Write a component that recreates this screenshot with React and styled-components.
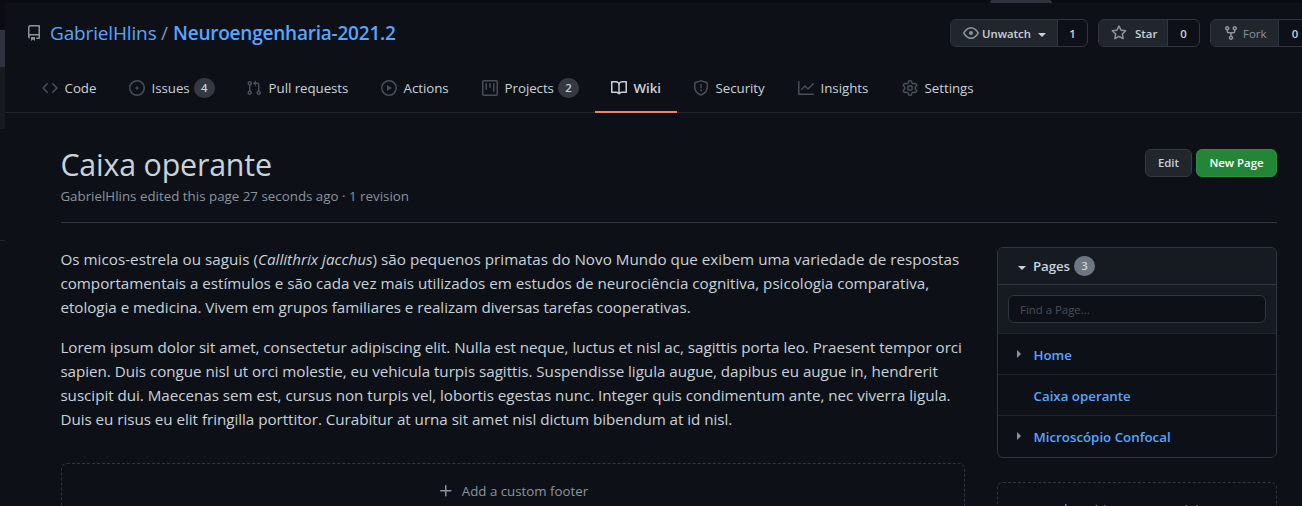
import React from 'react';
import styled, { createGlobalStyle } from 'styled-components';

const GlobalStyle = createGlobalStyle`
  *, *::before, *::after { box-sizing: border-box; }
  html, body { margin: 0; background: #0d1117; }
  body { overflow: hidden; }
  #root { width: 1302px; }
  p, h1, ul { margin: 0; padding: 0; }
  a { text-decoration: none; color: inherit; }
`;

const paths = {
  repo: 'M2 2.5A2.5 2.5 0 014.5 0h8.75a.75.75 0 01.75.75v12.5a.75.75 0 01-.75.75h-2.5a.75.75 0 110-1.5h1.75v-2h-8a1 1 0 00-.714 1.7.75.75 0 01-1.072 1.05A2.495 2.495 0 012 11.5v-9zm10.5-1V9h-8c-.356 0-.694.074-1 .208V2.5a1 1 0 011-1h8zM5 12.25v3.25a.25.25 0 00.4.2l1.45-1.087a.25.25 0 01.3 0L8.6 15.7a.25.25 0 00.4-.2v-3.25a.25.25 0 00-.25-.25h-3.5a.25.25 0 00-.25.25z',
  code: 'M4.72 3.22a.75.75 0 011.06 1.06L2.06 8l3.72 3.72a.75.75 0 11-1.06 1.06L.47 8.53a.75.75 0 010-1.06l4.25-4.25zm6.56 0a.75.75 0 10-1.06 1.06L13.94 8l-3.72 3.72a.75.75 0 101.06 1.06l4.25-4.25a.75.75 0 000-1.06l-4.25-4.25z',
  issue: 'M8 9.5a1.5 1.5 0 100-3 1.5 1.5 0 000 3zM8 0a8 8 0 100 16A8 8 0 008 0zM1.5 8a6.5 6.5 0 1113 0 6.5 6.5 0 01-13 0z',
  pull: 'M7.177 3.073L9.573.677A.25.25 0 0110 .854v4.792a.25.25 0 01-.427.177L7.177 3.427a.25.25 0 010-.354zM3.75 2.5a.75.75 0 100 1.5.75.75 0 000-1.5zm-2.25.75a2.25 2.25 0 113 2.122v5.256a2.251 2.251 0 11-1.5 0V5.372A2.25 2.25 0 011.5 3.25zM11 2.5h-1V4h1a1 1 0 011 1v5.628a2.251 2.251 0 101.5 0V5A2.5 2.5 0 0011 2.5zm1 10.25a.75.75 0 111.5 0 .75.75 0 01-1.5 0zM3.75 12a.75.75 0 100 1.5.75.75 0 000-1.5z',
  play: 'M1.5 8a6.5 6.5 0 1113 0 6.5 6.5 0 01-13 0zM8 0a8 8 0 100 16A8 8 0 008 0zM6.379 5.227A.25.25 0 006 5.442v5.117a.25.25 0 00.379.214l4.264-2.559a.25.25 0 000-.428L6.379 5.227z',
  project: 'M1.75 0A1.75 1.75 0 000 1.75v12.5C0 15.216.784 16 1.75 16h12.5A1.75 1.75 0 0016 14.25V1.75A1.75 1.75 0 0014.25 0H1.75zM1.5 1.75a.25.25 0 01.25-.25h12.5a.25.25 0 01.25.25v12.5a.25.25 0 01-.25.25H1.75a.25.25 0 01-.25-.25V1.75zM11.75 3a.75.75 0 00-.75.75v7.5a.75.75 0 001.5 0v-7.5a.75.75 0 00-.75-.75zm-8.25.75a.75.75 0 011.5 0v5.5a.75.75 0 01-1.5 0v-5.5zM8 3a.75.75 0 00-.75.75v3.5a.75.75 0 001.5 0v-3.5A.75.75 0 008 3z',
  book: 'M0 1.75A.75.75 0 01.75 1h4.253c1.227 0 2.317.59 3 1.501A3.744 3.744 0 0111.006 1h4.245a.75.75 0 01.75.75v10.5a.75.75 0 01-.75.75h-4.507a2.25 2.25 0 00-1.591.659l-.622.621a.75.75 0 01-1.06 0l-.622-.621A2.25 2.25 0 005.258 13H.75a.75.75 0 01-.75-.75V1.75zm8.755 3a2.25 2.25 0 012.25-2.25H14.5v9h-3.757c-.71 0-1.4.201-1.992.572l.004-7.322zm-1.504 7.324l.004-5.073-.002-2.253A2.25 2.25 0 005.003 2.5H1.5v9h3.757a3.75 3.75 0 011.994.574z',
  shield: 'M7.467.133a1.75 1.75 0 011.066 0l5.25 1.68A1.75 1.75 0 0115 3.48V7c0 1.566-.32 3.182-1.303 4.682-.983 1.498-2.585 2.813-5.032 3.855a1.7 1.7 0 01-1.33 0c-2.447-1.042-4.049-2.357-5.032-3.855C1.32 10.182 1 8.566 1 7V3.48a1.75 1.75 0 011.217-1.667l5.25-1.68zm.61 1.429a.25.25 0 00-.153 0l-5.25 1.68a.25.25 0 00-.174.238V7c0 1.358.275 2.666 1.057 3.86.784 1.194 2.121 2.34 4.366 3.297a.2.2 0 00.154 0c2.245-.956 3.582-2.104 4.366-3.298C13.225 9.666 13.5 8.36 13.5 7V3.48a.25.25 0 00-.174-.237l-5.25-1.68zM9 10.5a1 1 0 11-2 0 1 1 0 012 0zm-.25-5.75a.75.75 0 10-1.5 0v3a.75.75 0 001.5 0v-3z',
  graph: 'M1.5 1.75a.75.75 0 00-1.5 0v12.5c0 .414.336.75.75.75h14.5a.75.75 0 000-1.5H1.5V1.75zm14.28 2.53a.75.75 0 00-1.06-1.06L10 7.94 7.53 5.47a.75.75 0 00-1.06 0L3.22 8.72a.75.75 0 001.06 1.06L7 7.06l2.47 2.47a.75.75 0 001.06 0l5.25-5.25z',
  gear: 'M7.429 1.525a6.593 6.593 0 011.142 0c.036.003.108.036.137.146l.289 1.105c.147.56.55.967.997 1.189.174.086.341.183.501.29.417.278.97.423 1.53.27l1.102-.303c.11-.03.175.016.195.046.219.31.41.641.573.989.014.031.022.11-.059.19l-.815.806c-.411.406-.562.957-.53 1.456a4.588 4.588 0 010 .582c-.032.499.119 1.05.53 1.456l.815.806c.08.08.073.159.059.19a6.494 6.494 0 01-.573.99c-.02.029-.086.074-.195.045l-1.103-.303c-.559-.153-1.112-.008-1.529.27-.16.107-.327.204-.5.29-.449.222-.851.628-.998 1.189l-.289 1.105c-.029.11-.101.143-.137.146a6.613 6.613 0 01-1.142 0c-.036-.003-.108-.037-.137-.146l-.289-1.105c-.147-.56-.55-.967-.997-1.189a4.502 4.502 0 01-.501-.29c-.417-.278-.97-.423-1.53-.27l-1.102.303c-.11.03-.175-.016-.195-.046a6.492 6.492 0 01-.573-.989c-.014-.031-.022-.11.059-.19l.815-.806c.411-.406.562-.957.53-1.456a4.587 4.587 0 010-.582c.032-.499-.119-1.05-.53-1.456l-.815-.806c-.08-.08-.073-.159-.059-.19a6.44 6.44 0 01.573-.99c.02-.029.086-.075.195-.045l1.103.303c.559.153 1.112.008 1.529-.27.16-.107.327-.204.5-.29.449-.222.851-.628.998-1.189l.289-1.105c.029-.11.101-.143.137-.146zM8 0c-.236 0-.47.01-.701.03-.743.065-1.29.615-1.458 1.261l-.29 1.106c-.017.066-.078.158-.211.224a5.994 5.994 0 00-.668.386c-.123.082-.233.09-.3.071L3.27 2.776c-.644-.177-1.392.02-1.82.63a7.977 7.977 0 00-.704 1.217c-.315.675-.111 1.422.363 1.891l.815.806c.05.048.098.147.088.294a6.084 6.084 0 000 .772c.01.147-.038.246-.088.294l-.815.806c-.474.469-.678 1.216-.363 1.891.2.428.436.835.704 1.218.428.609 1.176.806 1.82.63l1.103-.303c.066-.019.176-.011.299.071.213.143.436.272.668.386.133.066.194.158.212.224l.289 1.106c.169.646.715 1.196 1.458 1.26a8.094 8.094 0 001.402 0c.743-.064 1.29-.614 1.458-1.26l.29-1.106c.017-.066.078-.158.211-.224a5.98 5.98 0 00.668-.386c.123-.082.233-.09.3-.071l1.102.302c.644.177 1.392-.02 1.82-.63.268-.382.505-.789.704-1.217.315-.675.111-1.422-.364-1.891l-.814-.806c-.05-.048-.098-.147-.088-.294a6.1 6.1 0 000-.772c-.01-.147.039-.246.088-.294l.814-.806c.475-.469.679-1.216.364-1.891a7.992 7.992 0 00-.704-1.218c-.428-.609-1.176-.806-1.82-.63l-1.103.303c-.066.019-.176.011-.299-.071a5.991 5.991 0 00-.668-.386c-.133-.066-.194-.158-.212-.224L10.16 1.29C9.99.645 9.444.095 8.701.031A8.094 8.094 0 008 0zm1.5 8a1.5 1.5 0 11-3 0 1.5 1.5 0 013 0zM11 8a3 3 0 11-6 0 3 3 0 016 0z',
  eye: 'M1.679 7.932c.412-.621 1.242-1.75 2.366-2.717C5.175 4.242 6.527 3.5 8 3.5c1.473 0 2.824.742 3.955 1.715 1.124.967 1.954 2.096 2.366 2.717a.119.119 0 010 .136c-.412.621-1.242 1.75-2.366 2.717C10.825 11.758 9.473 12.5 8 12.5c-1.473 0-2.824-.742-3.955-1.715C2.92 9.818 2.09 8.69 1.679 8.068a.119.119 0 010-.136zM8 2c-1.981 0-3.67.992-4.933 2.078C1.797 5.169.88 6.423.43 7.1a1.619 1.619 0 000 1.798c.45.678 1.367 1.932 2.637 3.024C4.329 13.008 6.019 14 8 14c1.981 0 3.67-.992 4.933-2.078 1.27-1.091 2.187-2.345 2.637-3.023a1.619 1.619 0 000-1.798c-.45-.678-1.367-1.932-2.637-3.023C11.671 2.992 9.981 2 8 2zm0 8a2 2 0 100-4 2 2 0 000 4z',
  star: 'M8 .25a.75.75 0 01.673.418l1.882 3.815 4.21.612a.75.75 0 01.416 1.279l-3.046 2.97.719 4.192a.75.75 0 01-1.088.791L8 12.347l-3.766 1.98a.75.75 0 01-1.088-.79l.72-4.194L.818 6.374a.75.75 0 01.416-1.28l4.21-.611L7.327.668A.75.75 0 018 .25zm0 2.445L6.615 5.5a.75.75 0 01-.564.41l-3.097.45 2.24 2.184a.75.75 0 01.216.664l-.528 3.084 2.769-1.456a.75.75 0 01.698 0l2.77 1.456-.53-3.084a.75.75 0 01.216-.664l2.24-2.183-3.096-.45a.75.75 0 01-.564-.41L8 2.694v.001z',
  fork: 'M5 3.25a.75.75 0 11-1.5 0 .75.75 0 011.5 0zm0 2.122a2.25 2.25 0 10-1.5 0v.878A2.25 2.25 0 005.75 8.5h1.5v2.128a2.251 2.251 0 101.5 0V8.5h1.5a2.25 2.25 0 002.25-2.25v-.878a2.25 2.25 0 10-1.5 0v.878a.75.75 0 01-.75.75h-4.5A.75.75 0 015 6.25v-.878zm3.75 7.378a.75.75 0 11-1.5 0 .75.75 0 011.5 0zm3-8.75a.75.75 0 100-1.5.75.75 0 000 1.5z',
  plus: 'M7.75 2a.75.75 0 01.75.75V7h4.25a.75.75 0 110 1.5H8.5v4.25a.75.75 0 11-1.5 0V8.5H2.75a.75.75 0 010-1.5H7V2.75A.75.75 0 017.75 2z',
};

const Svg = styled.svg`
  display: block;
  flex: none;
  fill: ${(p) => p.$color || '#8b949e'};
`;
const Icon = ({ name, color, size = 16 }) => (
  <Svg width={size} height={size} viewBox="0 0 16 16" $color={color} aria-hidden="true">
    <path fillRule="evenodd" d={paths[name]} />
  </Svg>
);

const Window = styled.div`
  display: flex;
  flex-direction: column;
  width: 1302px;
  height: 506px;
  overflow: hidden;
  background: #0b0b13;
  color: #c9d1d9;
  font-family: 'Open Sans', 'Noto Sans', sans-serif;
  font-size: 13.3px;
  white-space: nowrap;
`;
const BrowserEdge = styled.div`
  flex: none;
  height: 3px;
  padding-left: 990px;
`;
const BrowserTab = styled.div`
  width: 62px;
  height: 3px;
  background: #31323f;
  border-radius: 3px 3px 0 0;
`;
const Columns = styled.div`
  display: flex;
  flex: 1;
  min-height: 0;
`;
const Rail = styled.div`
  flex: none;
  width: 5px;
  display: flex;
  flex-direction: column;
`;
const RailPart = styled.div`
  flex: none;
  height: ${(p) => p.$h}px;
  background: ${(p) => p.$bg};
`;
const Page = styled.div`
  flex: none;
  width: 1297px;
  background: #0d1117;
`;

const Header = styled.header`
  height: 110px;
  border-bottom: 1px solid #21262d;
`;
const RepoBar = styled.div`
  display: flex;
  align-items: center;
  height: 60px;
  padding-left: 21px;
`;
const RepoPath = styled.div`
  display: flex;
  flex: none;
  align-items: center;
  width: 924px;
  font-size: 19px;
  line-height: 30px;
  color: #58a6ff;
`;
const Owner = styled.a`
  width: 106px;
  margin-left: 8px;
  letter-spacing: -0.15px;
`;
const Slash = styled.span`
  width: 17px;
  text-align: center;
  color: #8b949e;
`;
const RepoName = styled.a`
  font-weight: 600;
  letter-spacing: -0.22px;
`;
const Social = styled.div`
  display: flex;
  flex: none;
  width: ${(p) => p.$w}px;
  height: 28px;
  margin-right: 10px;
  border: 1px solid #30363d;
  border-radius: 6px;
  overflow: hidden;
  font-size: 11.4px;
  font-weight: 600;
  line-height: 27px;
`;
const SocialAction = styled.div`
  display: flex;
  align-items: center;
  gap: ${(p) => p.$gap}px;
  width: ${(p) => p.$w}px;
  padding-left: 12px;
  background: #21262d;
  border-right: 1px solid #30363d;
  color: ${(p) => (p.$muted ? '#8b949e' : '#c9d1d9')};
  font-weight: ${(p) => (p.$muted ? 400 : 600)};
`;
const SocialCount = styled.div`
  flex: 1;
  text-align: center;
`;
const Caret = styled.span`
  width: 0;
  height: 0;
  margin: 3px 0 0 ${(p) => p.$ml || 0}px;
  border: 4px solid transparent;
  border-top-color: currentColor;
  border-bottom-width: 0;
`;

const Tabs = styled.nav`
  display: flex;
  height: 50px;
  padding-left: 21px;
`;
const Tab = styled.a`
  display: flex;
  flex: none;
  align-items: center;
  width: ${(p) => p.$w}px;
  padding: 2px 0 0 16px;
  border-bottom: 2px solid ${(p) => (p.$active ? '#f78166' : 'transparent')};
  font-weight: ${(p) => (p.$active ? 600 : 400)};
`;
const TabLabel = styled.span`
  margin: 0 4px 0 6.6px;
  letter-spacing: -0.05px;
`;
const Counter = styled.span`
  width: 21px;
  height: 20px;
  border-radius: 10px;
  background: ${(p) => p.$bg || '#343941'};
  font-size: 11.4px;
  font-weight: 600;
  line-height: 20px;
  text-align: center;
`;

const Main = styled.main`
  padding: 0 25px 0 56px;
`;
const WikiHead = styled.div`
  display: flex;
  justify-content: space-between;
  height: 110px;
  padding-top: 36px;
  border-bottom: 1px solid #30363d;
`;
const Title = styled.h1`
  margin-left: -0.6px;
  font-size: 30.4px;
  font-weight: 400;
  line-height: 32px;
  letter-spacing: -0.2px;
`;
const Edited = styled.p`
  margin: 5px 0 0 -0.6px;
  line-height: 20px;
  letter-spacing: 0.02px;
  color: #8b949e;
`;
const Buttons = styled.div`
  display: flex;
  gap: 4px;
`;
const Button = styled.button`
  width: ${(p) => p.$w}px;
  height: 28px;
  padding: 0;
  border: 1px solid ${(p) => (p.$primary ? '#2f8f40' : '#363b42')};
  border-radius: 6px;
  background: ${(p) => (p.$primary ? '#238636' : '#21262d')};
  color: ${(p) => (p.$primary ? '#fff' : '#c9d1d9')};
  font: 600 11.4px/26px 'Open Sans', 'Noto Sans', sans-serif;
`;
const WikiBody = styled.div`
  display: flex;
  justify-content: space-between;
  padding-top: 24px;
`;
const Article = styled.article`
  width: 904px;
`;
const Paragraph = styled.p`
  margin: 0 0 16px -0.6px;
  font-size: 15.2px;
  line-height: 24px;
`;
const Line = styled.span`
  display: block;
  letter-spacing: ${(p) => p.$ls || 0}px;
`;
const AddBox = styled.a`
  display: flex;
  justify-content: center;
  align-items: flex-start;
  gap: 8px;
  height: 58px;
  margin-top: ${(p) => p.$mt}px;
  padding-top: ${(p) => p.$pt}px;
  border: 1px dashed #30363d;
  border-radius: 6px;
  color: #8b949e;
  line-height: 20px;
`;
const PlusWrap = styled.span`
  padding-top: 2px;
`;

const Sidebar = styled.aside`
  width: 280px;
`;
const PagesBox = styled.div`
  height: 211px;
  border: 1px solid #30363d;
  border-radius: 6px;
  overflow: hidden;
`;
const PagesHead = styled.div`
  display: flex;
  align-items: center;
  height: 37px;
  padding-left: 20px;
  background: #161b22;
  border-bottom: 1px solid #30363d;
  font-weight: 600;
`;
const PagesTitle = styled.span`
  width: 38px;
  margin: 0 3px 0 7px;
  letter-spacing: -0.1px;
`;
const Filter = styled.div`
  height: 49px;
  padding: 10px;
  background: #161b22;
  border-bottom: 1px solid #21262d;
`;
const FilterInput = styled.input`
  display: block;
  width: 258px;
  height: 28px;
  padding: 0 12px 0 11px;
  border: 1px solid #30363d;
  border-radius: 6px;
  background: #0d1117;
  font: 400 11.4px 'Open Sans', 'Noto Sans', sans-serif;
  &::placeholder { color: #484f58; opacity: 1; }
`;
const PageRow = styled.div`
  display: flex;
  align-items: center;
  height: 41px;
  padding: 1px 0 0 19px;
  border-bottom: 1px solid #21262d;
  color: #58a6ff;
  font-weight: 600;
  &:last-child { padding-top: 0; border-bottom: 0; }
`;
const Disclosure = styled.span`
  width: 16.5px;
  height: 10px;
  &::before {
    content: '';
    display: ${(p) => (p.$shown ? 'block' : 'none')};
    width: 0;
    height: 0;
    border: 4px solid transparent;
    border-left-color: #8b949e;
    border-right-width: 0;
  }
`;

const tabs = [
  ['code', 'Code', 87],
  ['issue', 'Issues', 117, '4'],
  ['pull', 'Pull requests', 135],
  ['play', 'Actions', 101],
  ['project', 'Projects', 129, '2'],
  ['book', 'Wiki', 82],
  ['shield', 'Security', 105],
  ['graph', 'Insights', 104],
  ['gear', 'Settings', 105],
];
const pages = [['Home', true], ['Caixa operante', false], ['Microscópio Confocal', true]];

export default function App() {
  return (
    <Window>
      <GlobalStyle />
      <BrowserEdge><BrowserTab /></BrowserEdge>
      <Columns>
        <Rail>
          <RailPart $h={27} $bg="#0b0b13" />
          <RailPart $h={37} $bg="#31323f" />
          <RailPart $h={62} $bg="#161b22" />
          <RailPart $h={111} $bg="#0d1117" />
          <RailPart $h={1} $bg="#21262d" />
          <RailPart $h={265} $bg="#0d1117" />
        </Rail>
        <Page>
          <Header>
            <RepoBar>
              <RepoPath>
                <Icon name="repo" />
                <Owner>GabrielHlins</Owner>
                <Slash>/</Slash>
                <RepoName>Neuroengenharia-2021.2</RepoName>
              </RepoPath>
              <Social $w={138}>
                <SocialAction $w={107} $gap={3}>
                  <Icon name="eye" />Unwatch<Caret $ml={4} />
                </SocialAction>
                <SocialCount>1</SocialCount>
              </Social>
              <Social $w={102}>
                <SocialAction $w={69} $gap={8}><Icon name="star" />Star</SocialAction>
                <SocialCount>0</SocialCount>
              </Social>
              <Social $w={102}>
                <SocialAction $w={68} $gap={4} $muted><Icon name="fork" />Fork</SocialAction>
                <SocialCount>0</SocialCount>
              </Social>
            </RepoBar>
            <Tabs>
              {tabs.map(([icon, label, w, count]) => (
                <Tab key={label} $w={w} $active={label === 'Wiki'}>
                  <Icon name={icon} color={label === 'Wiki' ? '#c9d1d9' : '#484f58'} />
                  <TabLabel>{label}</TabLabel>
                  {count && <Counter>{count}</Counter>}
                </Tab>
              ))}
            </Tabs>
          </Header>
          <Main>
            <WikiHead>
              <div>
                <Title>Caixa operante</Title>
                <Edited>GabrielHlins edited this page 27 seconds ago · 1 revision</Edited>
              </div>
              <Buttons>
                <Button $w={47}>Edit</Button>
                <Button $w={81} $primary>New Page</Button>
              </Buttons>
            </WikiHead>
            <WikiBody>
              <Article>
                <Paragraph>
                  <Line $ls={0.03}>Os micos-estrela ou saguis (<em>Callithrix jacchus</em>) são pequenos primatas do Novo Mundo que exibem uma variedade de respostas</Line>
                  <Line $ls={-0.01}>comportamentais a estímulos e são cada vez mais utilizados em estudos de neurociência cognitiva, psicologia comparativa,</Line>
                  <Line $ls={-0.03}>etologia e medicina. Vivem em grupos familiares e realizam diversas tarefas cooperativas.</Line>
                </Paragraph>
                <Paragraph>
                  <Line $ls={-0.03}>Lorem ipsum dolor sit amet, consectetur adipiscing elit. Nulla est neque, luctus et nisl ac, sagittis porta leo. Praesent tempor orci</Line>
                  <Line $ls={-0.03}>sapien. Duis congue nisl ut orci molestie, eu vehicula turpis sagittis. Suspendisse ligula augue, dapibus eu augue in, hendrerit</Line>
                  <Line $ls={-0.03}>suscipit dui. Maecenas sem est, cursus non turpis vel, lobortis egestas nunc. Integer quis condimentum ante, nec viverra ligula.</Line>
                  <Line $ls={-0.035}>Duis eu risus eu elit fringilla porttitor. Curabitur at urna sit amet nisl dictum bibendum at id nisl.</Line>
                </Paragraph>
                <AddBox $mt={32} $pt={17}>
                  <PlusWrap><Icon name="plus" /></PlusWrap>Add a custom footer
                </AddBox>
              </Article>
              <Sidebar>
                <PagesBox>
                  <PagesHead>
                    <Caret />
                    <PagesTitle>Pages</PagesTitle>
                    <Counter $bg="#6e7681">3</Counter>
                  </PagesHead>
                  <Filter><FilterInput placeholder="Find a Page..." /></Filter>
                  {pages.map(([name, shown]) => (
                    <PageRow key={name}><Disclosure $shown={shown} />{name}</PageRow>
                  ))}
                </PagesBox>
                <AddBox $mt={24} $pt={17}>
                  <PlusWrap><Icon name="plus" /></PlusWrap>Add a custom sidebar
                </AddBox>
              </Sidebar>
            </WikiBody>
          </Main>
        </Page>
      </Columns>
    </Window>
  );
}
